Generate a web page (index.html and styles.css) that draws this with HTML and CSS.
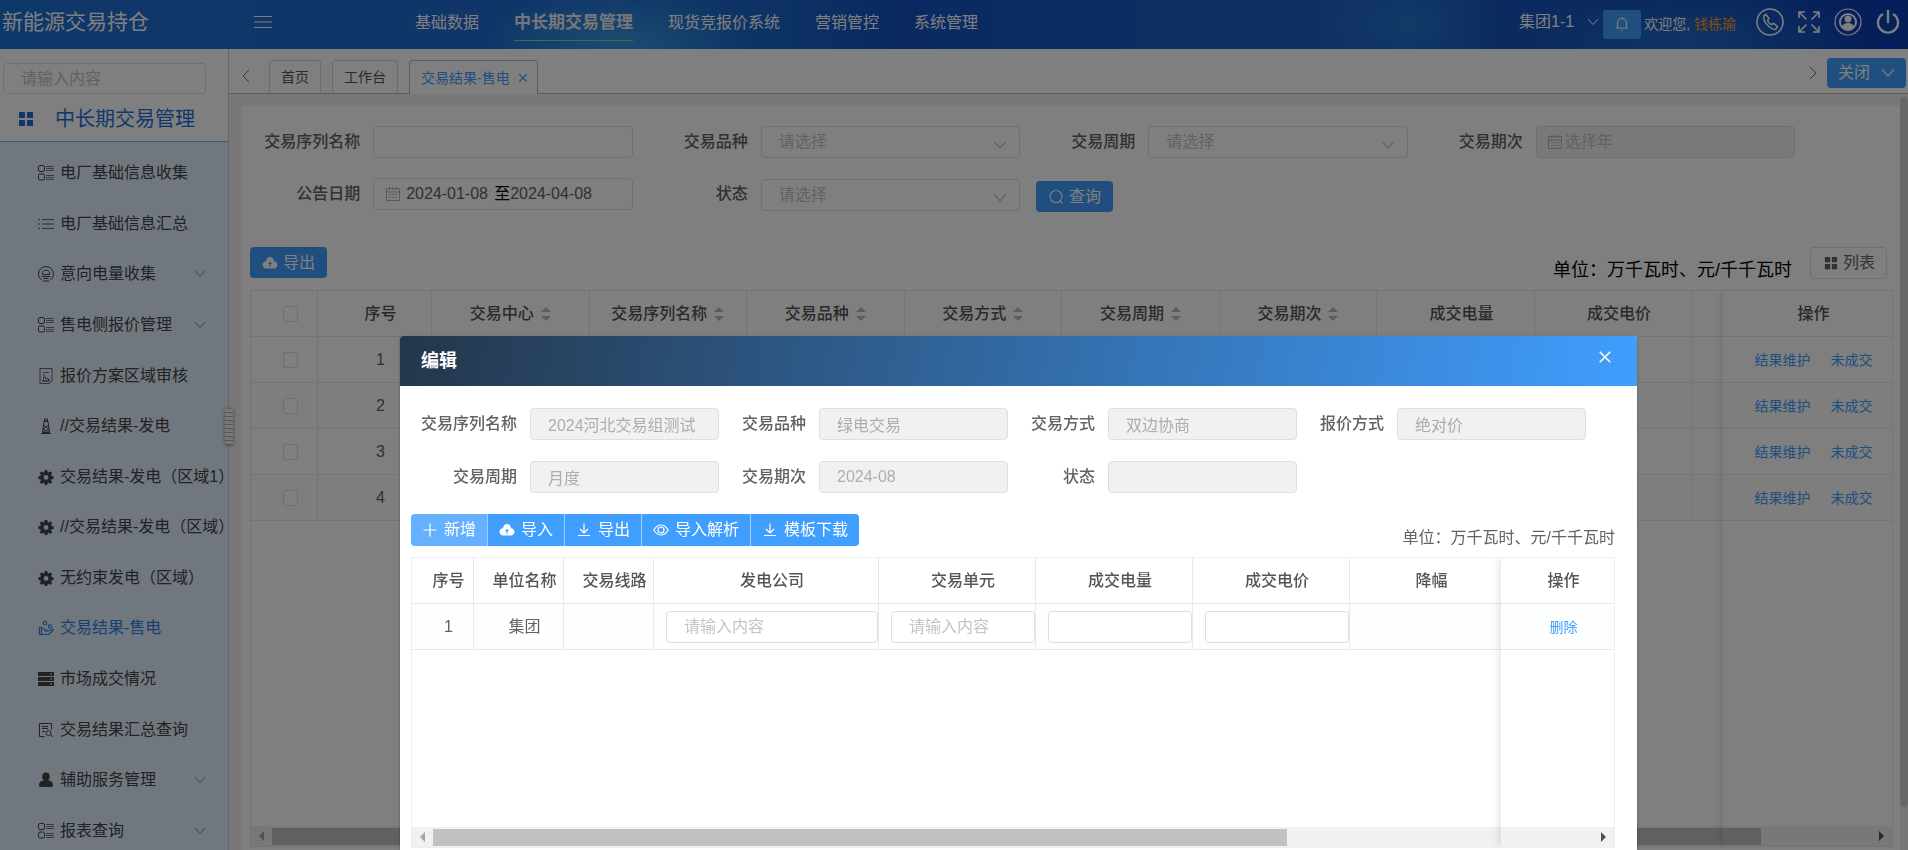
FILE: index.html
```html
<!DOCTYPE html>
<html lang="zh-CN">
<head>
<meta charset="utf-8">
<title>新能源交易持仓</title>
<link rel="stylesheet" href="styles.css">
</head>
<body>
<svg class="sprite" aria-hidden="true">
  <symbol id="i-down" viewBox="0 0 12 12"><path d="M1 3l5 5.500 5-5.500" fill="none" stroke="currentColor"/></symbol>
  <symbol id="i-cards" viewBox="0 0 16 16"><g fill="none" stroke="currentColor"><rect x=".5" y=".5" width="6" height="6" rx="1.500"/><rect x=".5" y="9" width="6" height="6" rx="1.500"/><path d="M8 1.500h8M8 3.500h8M8 5.500h8M8 10.500h8M8 12.500h8M8 14.500h8" stroke-opacity=".7"/></g></symbol>
  <symbol id="i-list" viewBox="0 0 16 16"><path d="M0 3.500h2M4 3.500h12M0 8h2M4 8h12M0 12.500h2M4 12.500h12" stroke="currentColor" stroke-opacity=".8"/></symbol>
  <symbol id="i-intent" viewBox="0 0 16 16"><g fill="none" stroke="currentColor"><path d="M3.500 14a7.500 7.500 0 1 1 9 0"/><path d="M4.500 6.500c0-3 7-3 7 0v2h-7zM3.500 10.500h9M5.500 12.500h5M4.500 15h7"/></g></symbol>
  <symbol id="i-doc" viewBox="0 0 16 16"><g fill="none" stroke="currentColor" stroke-opacity=".8"><path d="M2 .5h12v12l-2.500 3H2zM5 4.500h6M5 7h2"/><path d="M5.500 13V9h2v1.500h3V13zM4 13h8"/></g></symbol>
  <symbol id="i-tower" viewBox="0 0 16 16"><path d="M6.500 1h3v2h-3zM6 3.500h4l1.500 11h-7zM3 15.500h10M5.500 7l5 3.500M10.500 7l-5.500 4M5 14l6-3M5 11l6 3" fill="none" stroke="currentColor"/></symbol>
  <symbol id="i-gear" viewBox="0 0 16 16"><path fill="currentColor" fill-rule="evenodd" d="M6.700 1h2.600l.4 2 1.100.5 1.700-1.200 1.800 1.900-1.200 1.600.5 1.200 2 .3v2.600l-2 .4-.5 1.100 1.200 1.700-1.800 1.800-1.700-1.200-1.100.5-.4 1.800H6.700l-.4-1.800-1.100-.5-1.700 1.200-1.800-1.800 1.200-1.700-.5-1.100-2-.4V7.300l2-.3.5-1.200-1.200-1.600 1.800-1.900 1.700 1.200L6.300 3zM8 6a2.400 2.400 0 1 0 0 4.800A2.400 2.400 0 0 0 8 6z"/></symbol>
  <symbol id="i-hand" viewBox="0 0 16 16"><g fill="none" stroke="currentColor" stroke-width="1.100"><circle cx="7" cy="3" r="1.700"/><circle cx="12" cy="6.500" r="1.700"/><path d="M1.500 7.500h2v7h-2zM3.500 8.500l3 .5 3 2h-3 4l4-1.500c1 0 1 1 0 1.500l-4 3.500h-7"/></g></symbol>
  <symbol id="i-server" viewBox="0 0 16 16"><path fill="currentColor" fill-rule="evenodd" d="M0 1h16v4H0zm12 1.500v1h2v-1zM0 6h16v4H0zm12 1.500v1h2v-1zM0 11h16v4H0zm12 1.500v1h2v-1z"/></symbol>
  <symbol id="i-docfind" viewBox="0 0 16 16"><g fill="none" stroke="currentColor"><path d="M6.500 14.500h-5V1.500h12v6M4 4.500h6M4 6.500h6M4 9.500h3"/><circle cx="10.500" cy="11" r="2.500"/><path d="M12.500 12.500l2.500 2.500"/></g></symbol>
  <symbol id="i-person" viewBox="0 0 16 16"><path fill="currentColor" d="M8 .5c5 0 4.500 7 1.800 7.800 3 .2 5.200 1.700 5.200 4.700 0 1.200-.6 2-2 2H3c-1.400 0-2-.8-2-2 0-3 2.200-4.500 5.200-4.700C3.500 7.500 3 .5 8 .5z"/></symbol>
  <symbol id="i-grid" viewBox="0 0 16 16"><path fill="currentColor" d="M1 1h6v6H1zM9 1h6v6H9zM1 9h6v6H1zM9 9h6v6H9z"/></symbol>
  <symbol id="i-cal" viewBox="0 0 16 16"><path d="M1.500 2.500h13v12h-13zM1.500 6h13M4.500 1v3M8 1v3M11.500 1v3M4 8.500h2M7 8.500h2M10 8.500h2M4 11.500h2M7 11.500h2M10 11.500h2" fill="none" stroke="currentColor"/></symbol>
  <symbol id="i-search" viewBox="0 0 16 16"><g fill="none" stroke="currentColor" stroke-width="1.200"><circle cx="8" cy="7.500" r="6"/><path d="M12 12l2.500 2.500"/></g></symbol>
  <symbol id="i-cloud" viewBox="0 0 16 16"><path fill="currentColor" fill-rule="evenodd" d="M4 6.200C4.200 3.500 6 2 8 2s3.800 1.500 4 4.200c2 .2 3.500 1.600 3.500 3.600s-1.500 3.700-3.700 3.700H4.200C2 13.500.5 11.800.5 9.800S2 6.400 4 6.200zM7.500 12h1V9h1.600L8 6.800 5.900 9h1.600z"/></symbol>
  <symbol id="i-plus" viewBox="0 0 16 16"><path d="M8 1.500v13M1.500 8h13" stroke="currentColor" stroke-width="1.200"/></symbol>
  <symbol id="i-download" viewBox="0 0 16 16"><path d="M8 1.500v9M4 7l4 4 4-4M2 13.500h12" fill="none" stroke="currentColor" stroke-width="1.200"/></symbol>
  <symbol id="i-eye" viewBox="0 0 16 16"><g fill="none" stroke="currentColor" stroke-width="1.200"><path d="M.8 8C3 4.500 5.500 3 8 3s5 1.500 7.200 5C13 11.500 10.500 13 8 13S3 11.500.8 8z"/><circle cx="8" cy="8" r="3"/></g></symbol>
  <symbol id="i-left" viewBox="0 0 8 14"><path d="M7 1L1 7l6 6" fill="none" stroke="currentColor"/></symbol>
  <symbol id="i-right" viewBox="0 0 8 14"><path d="M1 1l6 6-6 6" fill="none" stroke="currentColor"/></symbol>
  <symbol id="i-x" viewBox="0 0 12 12"><path d="M1.500 1.500l9 9M10.500 1.500l-9 9" stroke="currentColor" stroke-width="1.300"/></symbol>
  <symbol id="i-sort" viewBox="0 0 10 16"><path fill="currentColor" d="M5 1l5 5H0zM5 15l5-5H0z"/></symbol>
</svg>

<div class="app">
  <header class="topbar">
    <h1 class="brand">新能源交易持仓</h1>
    <button class="plain burger" aria-label="菜单"><svg width="18" height="14" viewBox="0 0 18 14"><path d="M0 1.500h18M0 7h18M0 12.500h18" stroke="currentColor"/></svg></button>
    <nav class="topnav">
      <a href="#">基础数据</a><a href="#" class="on">中长期交易管理</a><a href="#">现货竞报价系统</a><a href="#">营销管控</a><a href="#">系统管理</a>
    </nav>
    <div class="tools">
      <button class="plain org">集团1-1<svg width="12" height="12"><use href="#i-down"/></svg></button>
      <button class="bell" aria-label="通知"><svg width="14" height="14" viewBox="0 0 14 14"><path d="M1 11h12M2.500 11V6a4.500 4.500 0 0 1 9 0v5M7 0v1.500M6 13h2" fill="none" stroke="currentColor" stroke-width="1.200"/></svg></button>
      <span class="hello">欢迎您, <b>钱栋瑜</b></span>
      <span class="round-icons">
        <button class="plain" aria-label="电话"><svg width="28" height="28" viewBox="0 0 28 28" fill="none" stroke="currentColor" stroke-width="1.500"><circle cx="14" cy="14" r="13"/><path d="M8 7.500l2-1 3 4-1.500 2c1 2 2.500 3.500 4 4l2-1 4 3-1.500 2.500c-1 .7-4 0-7-2.500-4-3.500-6-8-5-11z"/></svg></button>
        <button class="plain" aria-label="全屏"><svg width="22" height="22" viewBox="0 0 22 22" fill="none" stroke="currentColor" stroke-width="1.600"><path d="M1 7V1h6M15 1h6v6M21 15v6h-6M7 21H1v-6M1.500 1.500l7 7M20.500 1.500l-7 7M20.500 20.500l-7-7M1.500 20.500l7-7"/></svg></button>
        <button class="plain" aria-label="用户"><svg width="28" height="28" viewBox="0 0 28 28"><circle cx="14" cy="14" r="13" fill="none" stroke="currentColor" stroke-width="1.200"/><circle cx="14" cy="14" r="8" fill="none" stroke="currentColor" stroke-width="2"/><circle cx="14" cy="11" r="3.500" fill="currentColor"/><path d="M8 18.500c1-2.500 3.500-3.500 6-3.500s5 1 6 3.500c-1.500 2-3.500 3.300-6 3.300s-4.500-1.300-6-3.300z" fill="currentColor"/></svg></button>
        <button class="plain" aria-label="退出"><svg width="24" height="26" viewBox="0 0 24 26" fill="none" stroke="currentColor" stroke-width="2.400"><path d="M12 1v13M7 5a10 10 0 1 0 10 0"/></svg></button>
      </span>
    </div>
  </header>

  <div class="body">
    <aside class="side">
      <div class="side-search"><input type="text" placeholder="请输入内容" aria-label="搜索菜单"></div>
      <h2 class="side-title"><svg width="16" height="16"><use href="#i-grid"/></svg>中长期交易管理</h2>
      <nav class="menu">
        <a href="#"><svg><use href="#i-cards"/></svg>电厂基础信息收集</a>
        <a href="#"><svg><use href="#i-list"/></svg>电厂基础信息汇总</a>
        <a href="#"><svg><use href="#i-intent"/></svg>意向电量收集<svg class="fold"><use href="#i-down"/></svg></a>
        <a href="#"><svg><use href="#i-cards"/></svg>售电侧报价管理<svg class="fold"><use href="#i-down"/></svg></a>
        <a href="#"><svg><use href="#i-doc"/></svg>报价方案区域审核</a>
        <a href="#"><svg><use href="#i-tower"/></svg>//交易结果-发电</a>
        <a href="#"><svg><use href="#i-gear"/></svg>交易结果-发电（区域1）</a>
        <a href="#"><svg><use href="#i-gear"/></svg>//交易结果-发电（区域）</a>
        <a href="#"><svg><use href="#i-gear"/></svg>无约束发电（区域）</a>
        <a href="#" class="on"><svg><use href="#i-hand"/></svg>交易结果-售电</a>
        <a href="#"><svg><use href="#i-server"/></svg>市场成交情况</a>
        <a href="#"><svg><use href="#i-docfind"/></svg>交易结果汇总查询</a>
        <a href="#"><svg><use href="#i-person"/></svg>辅助服务管理<svg class="fold"><use href="#i-down"/></svg></a>
        <a href="#"><svg><use href="#i-cards"/></svg>报表查询<svg class="fold"><use href="#i-down"/></svg></a>
      </nav>
      <div class="grip"></div>
    </aside>

    <main class="main">
      <div class="tabs">
        <button class="plain arrow" aria-label="向左"><svg width="8" height="14"><use href="#i-left"/></svg></button>
        <button class="tab">首页</button>
        <button class="tab">工作台</button>
        <button class="tab on">交易结果-售电<svg width="10" height="10"><use href="#i-x"/></svg></button>
        <span class="tabs-end">
          <button class="plain arrow" aria-label="向右"><svg width="8" height="14"><use href="#i-right"/></svg></button>
          <button class="btn close-tabs">关闭<svg width="14" height="14"><use href="#i-down"/></svg></button>
        </span>
      </div>

      <div class="scroller">
        <section class="panel">
          <form class="filters">
            <div class="field"><label for="f1">交易序列名称</label><input id="f1" class="box" type="text"></div>
            <div class="field"><label for="f2">交易品种</label><span class="pick"><select id="f2" class="box"><option>请选择</option></select><svg width="14" height="14"><use href="#i-down"/></svg></span></div>
            <div class="field"><label for="f3">交易周期</label><span class="pick"><select id="f3" class="box"><option>请选择</option></select><svg width="14" height="14"><use href="#i-down"/></svg></span></div>
            <div class="field"><label for="f4">交易期次</label><span class="box dates off"><svg width="16" height="16"><use href="#i-cal"/></svg><input id="f4" type="text" placeholder="选择年" disabled></span></div>
            <div class="field"><label for="f5">公告日期</label><span class="box dates"><svg width="16" height="16"><use href="#i-cal"/></svg><input id="f5" class="day" type="text" value="2024-01-08">至<input class="day" type="text" value="2024-04-08" aria-label="结束日期"></span></div>
            <div class="field"><label for="f6">状态</label><span class="pick"><select id="f6" class="box"><option>请选择</option></select><svg width="14" height="14"><use href="#i-down"/></svg></span></div>
            <div class="field-btn"><button type="button" class="btn"><svg width="16" height="16"><use href="#i-search"/></svg>查询</button></div>
          </form>

          <div class="bar">
            <button class="btn"><svg width="16" height="16"><use href="#i-cloud"/></svg>导出</button>
            <span class="unit">单位：万千瓦时、元/千千瓦时</span>
            <button class="btn ghost"><svg width="14" height="14"><use href="#i-grid"/></svg>列表</button>
          </div>

          <div class="grid-wrap">
            <table class="grid list">
              <colgroup><col class="w-check"><col class="w-no"><col class="w-col"><col class="w-col"><col class="w-col"><col class="w-col"><col class="w-col"><col class="w-col"><col class="w-col"><col class="w-col"><col><col class="w-act"></colgroup>
              <thead><tr>
                <th><input type="checkbox" aria-label="全选"></th><th>序号</th>
                <th>交易中心<svg class="sort"><use href="#i-sort"/></svg></th>
                <th>交易序列名称<svg class="sort"><use href="#i-sort"/></svg></th>
                <th>交易品种<svg class="sort"><use href="#i-sort"/></svg></th>
                <th>交易方式<svg class="sort"><use href="#i-sort"/></svg></th>
                <th>交易周期<svg class="sort"><use href="#i-sort"/></svg></th>
                <th>交易期次<svg class="sort"><use href="#i-sort"/></svg></th>
                <th>成交电量</th><th>成交电价</th><th class="last"></th><th class="last">操作</th>
              </tr></thead>
              <tbody>
                <tr><td><input type="checkbox" aria-label="选择1"></td><td>1</td><td></td><td></td><td></td><td></td><td></td><td></td><td></td><td></td><td class="last"></td><td class="last acts"><a href="#">结果维护</a><a href="#">未成交</a></td></tr>
                <tr><td><input type="checkbox" aria-label="选择2"></td><td>2</td><td></td><td></td><td></td><td></td><td></td><td></td><td></td><td></td><td class="last"></td><td class="last acts"><a href="#">结果维护</a><a href="#">未成交</a></td></tr>
                <tr><td><input type="checkbox" aria-label="选择3"></td><td>3</td><td></td><td></td><td></td><td></td><td></td><td></td><td></td><td></td><td class="last"></td><td class="last acts"><a href="#">结果维护</a><a href="#">未成交</a></td></tr>
                <tr><td><input type="checkbox" aria-label="选择4"></td><td>4</td><td></td><td></td><td></td><td></td><td></td><td></td><td></td><td></td><td class="last"></td><td class="last acts"><a href="#">结果维护</a><a href="#">未成交</a></td></tr>
              </tbody>
            </table>
            <div class="hbar"><i class="tri back"></i><span class="track"><i class="thumb long"></i></span><i class="tri"></i></div>
            <div class="pin wide"></div>
          </div>
        </section>
        <div class="vbar"></div>
      </div>
    </main>
  </div>
</div>

<div class="mask">
  <div class="dialog" role="dialog" aria-labelledby="dlg">
    <div class="dialog-head"><h3 id="dlg">编辑</h3><button class="plain" aria-label="关闭"><svg width="14" height="14"><use href="#i-x"/></svg></button></div>
    <div class="dialog-body">
      <form class="facts">
        <div class="fact"><label for="d1">交易序列名称</label><input id="d1" class="box" value="2024河北交易组测试" disabled></div>
        <div class="fact"><label for="d2">交易品种</label><input id="d2" class="box" value="绿电交易" disabled></div>
        <div class="fact"><label for="d3">交易方式</label><input id="d3" class="box" value="双边协商" disabled></div>
        <div class="fact"><label for="d4">报价方式</label><input id="d4" class="box" value="绝对价" disabled></div>
        <div class="fact"><label for="d5">交易周期</label><input id="d5" class="box" value="月度" disabled></div>
        <div class="fact"><label for="d6">交易期次</label><input id="d6" class="box" value="2024-08" disabled></div>
        <div class="fact"><label for="d7">状态</label><input id="d7" class="box" disabled></div>
      </form>
      <div class="dialog-bar">
        <div class="group">
          <button class="btn light"><svg width="16" height="16"><use href="#i-plus"/></svg>新增</button>
          <button class="btn"><svg width="16" height="16"><use href="#i-cloud"/></svg>导入</button>
          <button class="btn"><svg width="16" height="16"><use href="#i-download"/></svg>导出</button>
          <button class="btn"><svg width="16" height="16"><use href="#i-eye"/></svg>导入解析</button>
          <button class="btn"><svg width="16" height="16"><use href="#i-download"/></svg>模板下载</button>
        </div>
        <span class="unit">单位：万千瓦时、元/千千瓦时</span>
      </div>
      <div class="grid-wrap">
        <table class="grid edit">
          <colgroup><col class="w-a"><col class="w-b"><col class="w-b"><col class="w-c"><col class="w-d"><col class="w-d"><col class="w-d"><col><col class="w-e"></colgroup>
          <thead><tr><th>序号</th><th>单位名称</th><th>交易线路</th><th>发电公司</th><th>交易单元</th><th>成交电量</th><th>成交电价</th><th class="last">降幅</th><th class="last">操作</th></tr></thead>
          <tbody><tr>
            <td>1</td><td>集团</td><td></td>
            <td><input class="box" placeholder="请输入内容" aria-label="发电公司"></td>
            <td><input class="box" placeholder="请输入内容" aria-label="交易单元"></td>
            <td><input class="box" aria-label="成交电量"></td>
            <td><input class="box" aria-label="成交电价"></td>
            <td class="last"></td><td class="last"><a href="#">删除</a></td>
          </tr></tbody>
        </table>
        <div class="hbar"><i class="tri back"></i><span class="track"><i class="thumb"></i></span><i class="tri"></i></div>
        <div class="pin"></div>
      </div>
    </div>
  </div>
</div>
</body>
</html>
```
FILE: styles.css
```css
* { box-sizing: border-box; }

html, body { height: 100%; margin: 0; }

body {
  overflow: hidden;
  background: #fff;
  color: #606266;
  font: 16px/24px "Liberation Sans", "Noto Sans CJK SC", sans-serif;
}

button, input, select { margin: 0; font: inherit; color: inherit; }
a { color: inherit; text-decoration: none; }
svg { display: block; flex: none; }
h1, h2, h3 { margin: 0; font-weight: 400; }
.sprite { position: absolute; width: 0; height: 0; }

.plain { display: flex; align-items: center; padding: 0; border: 0; background: none; }

.app { display: flex; flex-direction: column; height: 100vh; }

/* top bar */
.topbar {
  display: flex;
  align-items: center;
  flex: none;
  height: 49px;
  padding: 0 8px 6px 2px;
  color: #fff;
  background:
    radial-gradient(140px 60px at 620px 44px, rgba(80, 190, 245, .55), transparent),
    radial-gradient(90px 60px at 1410px 24px, rgba(50, 150, 220, .45), transparent),
    radial-gradient(180px 60px at 1690px 40px, rgba(50, 150, 220, .45), transparent),
    linear-gradient(90deg, #1f70d4 0, #1f6bd2 25%, #1a66c8 40%, #1452c4 47%, #1860c4 62%, #1c62c8 70%, #124cb8 85%, #0c3cb4 100%);
}
.brand { width: 252px; font-size: 21px; line-height: 32px; }
.burger { width: 161px; }
.topnav { display: flex; flex: 1; gap: 35px; }
.topnav a { padding: 9px 0 6px; line-height: 22px; border-bottom: 1px solid transparent; }
.topnav .on { font-size: 17px; font-weight: 700; border-color: #5ff07a; color: #eee; }
.tools { display: flex; align-items: center; }
.org { gap: 13px; margin-right: 4px; }
.bell {
  display: flex; align-items: center; justify-content: center;
  width: 38px; height: 29px; margin: 5px 3px 0 0; padding: 0;
  border: 0; border-radius: 3px; background: #409eff;
}
.hello { font-size: 14px; padding-top: 4px; }
.hello b { font-weight: 400; color: #ff9a1f; }
.round-icons { display: flex; align-items: center; gap: 14px; margin-left: 20px; }

.body { display: flex; flex: 1; min-height: 0; }

/* sidebar */
.side {
  position: relative;
  display: flex;
  flex-direction: column;
  flex: none;
  width: 229px;
  border-right: 1px solid #ccc;
}
.side-search { padding: 14px 22px 0 3px; }
.side-search input {
  display: block; width: 100%; height: 31px; padding: 0 17px;
  border: 1px solid #dcdfe6; border-radius: 4px; background: #fff;
}
::placeholder { color: #c0c4cc; opacity: 1; }
.side-title {
  display: flex; align-items: center; gap: 21px;
  height: 48px; padding: 2px 0 0 18px;
  font-size: 20px; color: #1e6fd9;
  border-bottom: 1px solid #7fb4e8;
}
.menu {
  display: grid; grid-template-columns: minmax(0, 1fr); grid-auto-rows: 1fr; flex: 1; min-height: 0;
  margin-bottom: -6px; padding-top: 6px;
  background: #e3efff; color: #444;
}
.menu a { display: flex; align-items: center; gap: 6px; padding-left: 38px; white-space: nowrap; }
.menu svg { width: 16px; height: 16px; }
.menu .fold { width: 12px; height: 12px; margin: 0 22px 0 auto; color: #888; }
.menu .on { color: #2e7fe0; }
.grip {
  position: absolute; right: -5px; top: 360px; z-index: 1;
  width: 8px; height: 36px;
  background: repeating-linear-gradient(#eee 0 3px, #aaa 3px 4px);
  box-shadow: 0 0 4px rgba(0, 0, 0, .4);
}

/* tabs */
.main { display: flex; flex-direction: column; flex: 1; min-width: 0; overflow: hidden; }
.tabs {
  display: flex; align-items: flex-end; flex: none;
  height: 45px; padding-left: 13px;
  border-bottom: 1px solid #bbb;
  font-size: 14px;
}
.arrow { height: 34px; margin-right: 19px; color: #777; }
.tab {
  display: flex; align-items: center; gap: 8px;
  height: 33px; margin-right: 11px; padding: 0 11px;
  border: 1px solid #d4d7de; border-bottom: 0; border-radius: 4px 4px 0 0;
  background: #fff; color: #555;
}
.tab.on { height: 34px; margin-bottom: -1px; padding: 0 9px 0 11px; border-color: #bbb; color: #409eff; }
.tabs-end { display: flex; align-items: center; margin: 0 2px 3px auto; font-size: 16px; }
.tabs-end .arrow { margin-right: 10px; }

.btn {
  display: inline-flex; align-items: center; gap: 5px;
  height: 31px; padding: 0 12px;
  border: 0; border-radius: 4px;
  background: #409eff; color: #fff; white-space: nowrap;
}
.close-tabs { gap: 11px; height: 30px; padding: 0 11px; }
.ghost { height: 32px; padding: 0 11px 0 13px; border: 1px solid #dcdfe6; background: #fff; color: #606266; }

/* content */
.scroller { display: flex; flex: 1; min-height: 0; padding: 12px 0 0 12px; background: #f1f1f1; }
.panel { display: flex; flex-direction: column; flex: 1; min-width: 0; background: #fff; border-radius: 4px 0 0; }
.vbar { flex: none; width: 8px; margin: -9px 0 43px; border-radius: 4px; background: #cfcfcf; }

.filters {
  display: grid; grid-template-columns: repeat(4, minmax(0, 1fr)); row-gap: 20px;
  padding: 20px 105px 0 4px;
}
.field { display: grid; grid-template-columns: minmax(0, 115fr) minmax(0, 259fr); column-gap: 13px; }
.field label, .fact label { text-align: right; font-weight: 500; line-height: 32px; white-space: nowrap; }
.box {
  width: 100%; height: 32px; padding: 0 17px;
  border: 1px solid #dcdfe6; border-radius: 4px; background: #fff;
}
.pick { display: grid; align-items: center; }
.pick > * { grid-area: 1 / 1; }
.pick select { appearance: none; color: #c0c4cc; }
.pick svg { justify-self: end; margin: 5px 13px 0 0; color: #c0c4cc; pointer-events: none; }
.dates { display: flex; align-items: center; padding: 0 10px 0 11px; color: #000; }
.dates svg { margin-right: 5px; color: #b0b4bc; }
.dates input { width: 100%; padding: 0; border: 0; background: none; color: #606266; }
.dates .day { width: 88px; }
.dates.off { padding-left: 10px; background: #f2f2f2; }
.dates.off svg { margin-right: 2px; }
.field-btn { padding: 3px 0 0 16px; }

.bar { display: flex; align-items: center; margin: 34px 13px 11px 9px; }
.bar .unit { margin: 15px 18px 0 auto; font-size: 18px; color: #000; line-height: 18px; }

/* tables */
.grid-wrap {
  position: relative; display: flex; flex-direction: column; flex: 1; min-height: 0;
  border: 1px solid #ebeef5; overflow: hidden;
}
.panel .grid-wrap { margin: 0 7px 3px 9px; border-color: #e4e7ee; }
.grid { width: 100%; table-layout: fixed; border-collapse: separate; border-spacing: 0; }
.grid th, .grid td {
  height: 46px; padding: 0 0 0 12px; text-align: center; white-space: nowrap;
  border: 0 solid #e6e9f0; border-width: 0 1px 1px 0;
}
.grid th { font-weight: 500; color: #555; }
.grid .last { border-right: 0; }
.grid a { font-size: 14px; color: #409eff; }
.grid .acts a + a { margin-left: 20px; }
.list tbody tr:nth-child(even) { background: #fcfcfc; }
.edit tbody tr { background: #fdfffe; }
.edit .box { display: block; }
.sort { display: inline-block; width: 10px; height: 16px; margin: 0 12px 0 7px; vertical-align: -3px; color: #b4b8c0; }
.grid input[type="checkbox"] {
  display: block; appearance: none; width: 15px; height: 16px; margin: 0 auto;
  border: 1px solid #dcdfe6; border-radius: 2px; background: #fff;
}
.w-check { width: 67px; }
.w-no { width: 114px; }
.w-col { width: 9.6%; }
.w-act { width: 169px; }
.w-a { width: 62px; }
.w-b { width: 90px; }
.w-c { width: 225px; }
.w-d { width: 157px; }
.w-e { width: 113px; }

.pin {
  position: absolute; top: 0; right: 0; bottom: 0; width: 113px;
  box-shadow: 0 0 10px rgba(0, 0, 0, .16); pointer-events: none;
}
.pin.wide { width: 169px; }

.hbar { display: flex; align-items: center; height: 20px; margin-top: auto; padding: 0 8px; background: #f1f1f1; }
.track { flex: 1; margin: 0 14px 0 8px; }
.thumb { display: block; width: 74%; height: 17px; background: #c1c1c1; }
.thumb.long { width: 93.5%; }
.tri { border: 5px solid transparent; border-width: 5px 0 5px 5px; border-left-color: #505050; }
.tri.back { border-width: 5px 5px 5px 0; border-right-color: #a3a3a3; }

/* edit dialog */
.mask { position: fixed; inset: 0; z-index: 10; display: flex; padding: 336px 271px 0 400px; background: rgba(0, 0, 0, .5); }
.dialog {
  display: flex; flex-direction: column; flex: 1; min-width: 0;
  border-radius: 3px 3px 0 0; background: #fff; overflow: hidden;
  box-shadow: 0 1px 3px rgba(0, 0, 0, .3);
}
.dialog-head {
  display: flex; align-items: center; justify-content: space-between; flex: none;
  height: 50px; padding: 0 25px 0 21px; color: #fff;
  background: linear-gradient(100deg, #24364a, #409eff);
}
.dialog-head h3 { font-size: 18px; font-weight: 700; }
.dialog-head button { margin-bottom: 8px; }
.dialog-body { display: flex; flex-direction: column; flex: 1; min-height: 0; padding: 22px 22px 2px 11px; }
.facts {
  display: grid; grid-template-columns: 298fr 266fr 266fr 266fr; gap: 21px 23px;
  padding: 0 29px 0 10px;
}
.fact { display: grid; grid-template-columns: 1fr minmax(0, 189px); column-gap: 13px; }
.fact .box { background: #f1f1f1; color: #adadad; }
.dialog-bar { display: flex; align-items: flex-start; margin: 21px 0 7px; }
.dialog-bar .unit { margin: 12px 0 0 auto; }
.group { display: flex; gap: 1px; border-radius: 4px; overflow: hidden; background: #a0cfff; }
.group .btn { gap: 6px; height: 32px; padding: 0 11px; border-radius: 0; }
.group .light { background: #66b1ff; }
```
